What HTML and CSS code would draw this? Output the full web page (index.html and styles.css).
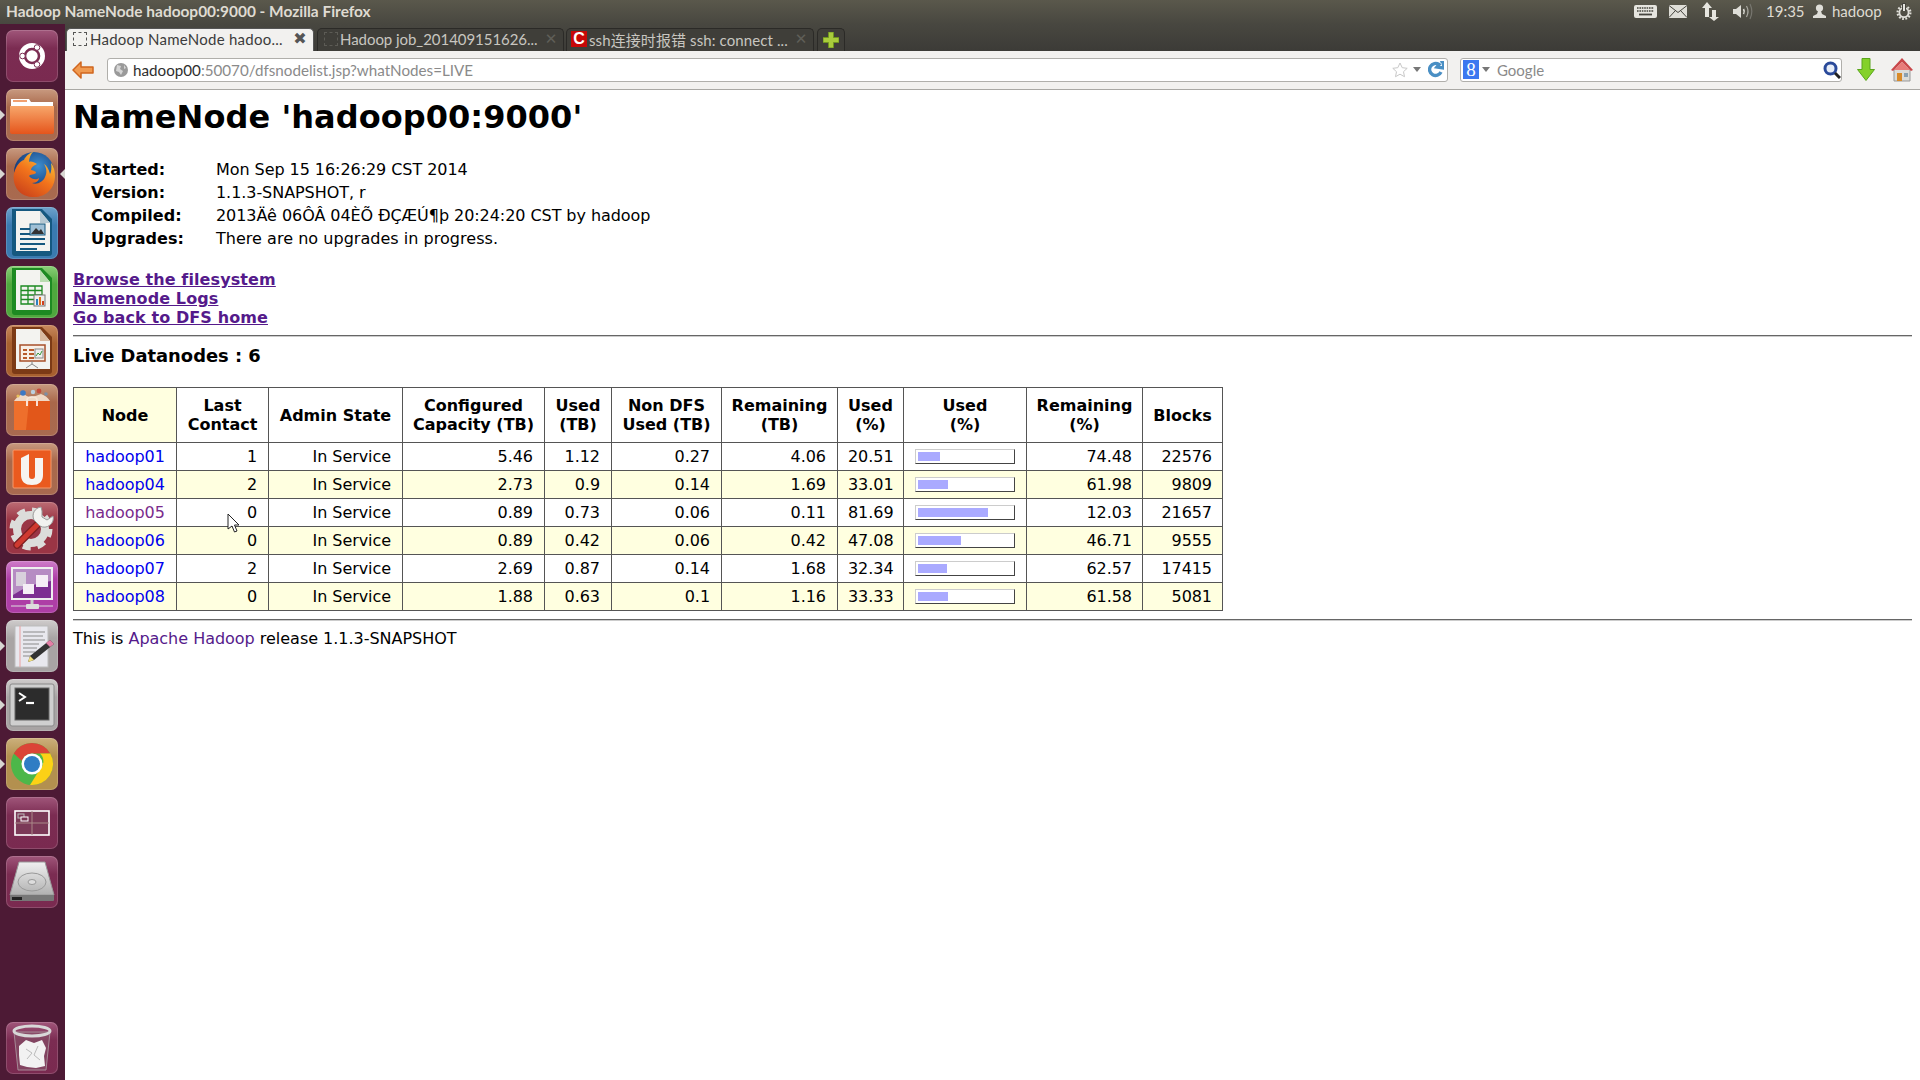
FILE: index.html
```html
<!DOCTYPE html>
<html lang="en">
<head>
<meta charset="utf-8">
<title>Hadoop NameNode hadoop00:9000</title>
<link rel="stylesheet" href="styles.css">
</head>
<body>
<div class="screen">
  <header class="panel">
    <span class="win-title">Hadoop NameNode hadoop00:9000 - Mozilla Firefox</span>
    <div class="tray">
      <svg class="t-kbd" width="23" height="13" viewBox="0 0 23 13"><rect width="23" height="13" rx="2" fill="#e6e5df"/><path d="M3 3h17M3 6h17" stroke="#45443e" stroke-width="1.6" stroke-dasharray="1.6 .8"/><path d="M5 9.5h13" stroke="#45443e" stroke-width="1.8"/></svg>
      <svg class="t-mail" width="18" height="13" viewBox="0 0 18 13"><rect width="18" height="13" fill="#dfded8"/><path d="M0 .5l9 7 9-7M0 12.5l6.5-7M18 12.5l-6.5-7" fill="none" stroke="#45443e" stroke-width="1"/></svg>
      <svg class="t-net" width="17" height="19" viewBox="0 0 17 19"><path d="M5 0l5 6H7v9H3V6H0zM10 8h4v7h3l-5 4-5-4h3z" fill="#e6e5df"/></svg>
      <svg class="t-vol" width="20" height="17" viewBox="0 0 20 17"><path d="M0 6h3l5-4v13l-5-4H0z" fill="#dfded8"/><path d="M10.5 6q1.5 2.500 0 5" fill="none" stroke="#dfded8" stroke-width="1.600"/><path d="M13.500 3q3 5.500 0 11" fill="none" stroke="#aaa9a2" stroke-width="1.200"/><path d="M17 1q3.600 7.500 0 15" fill="none" stroke="#77766f" stroke-width="1.200"/></svg>
      <span class="t-clock">19:35</span>
      <svg class="t-user" width="13" height="14" viewBox="0 0 13 14"><circle cx="6.500" cy="4" r="3.600" fill="#dfded8"/><path d="M5 7h3l1 3 4 2v2H0v-2l4-2z" fill="#dfded8"/></svg>
      <span class="t-name">hadoop</span>
      <svg class="t-gear" width="16" height="17" viewBox="0 0 16 17"><circle cx="8" cy="9.500" r="6.400" fill="none" stroke="#dfded8" stroke-width="2.200" stroke-dasharray="1.800 1.500"/><circle cx="8" cy="9.500" r="4.600" fill="none" stroke="#dfded8" stroke-width="1.800"/><path d="M8 0v8" stroke="#45443e" stroke-width="4"/><path d="M8 1v7" stroke="#e6e5df" stroke-width="2"/></svg>
    </div>
  </header>
  <div class="desk">
    <nav class="launcher">
      <div class="tile t-plum"><svg viewBox="0 0 52 52"><circle cx="26" cy="26" r="13" fill="#fff"/><circle cx="26" cy="26" r="7" fill="none" stroke="#7b2c52" stroke-width="2.600"/><circle cx="16.500" cy="26" r="2.800" fill="#fff" stroke="#7b2c52"/><circle cx="31" cy="17.500" r="2.800" fill="#fff" stroke="#7b2c52"/><circle cx="31" cy="34.500" r="2.800" fill="#fff" stroke="#7b2c52"/></svg></div>
      <div class="tile t-orange pip"><svg viewBox="0 0 52 52"><path d="M5 10h18l2 3h22v6H5z" fill="#fff"/><rect x="7" y="11" width="14" height="2" fill="#f0a070"/><path d="M4 17h44v26a2 2 0 0 1-2 2H6a2 2 0 0 1-2-2z" fill="url(#fold)"/><defs><linearGradient id="fold" x1="0" y1="0" x2="0" y2="1"><stop offset="0" stop-color="#f7a66a"/><stop offset="1" stop-color="#e5551c"/></linearGradient></defs></svg></div>
      <div class="tile t-orange pip pip-r"><svg viewBox="0 0 52 52"><defs><radialGradient id="ffg" cx=".6" cy=".35" r=".6"><stop offset="0" stop-color="#3d8fd0"/><stop offset="1" stop-color="#153a78"/></radialGradient><linearGradient id="ffo" x1=".8" y1="0" x2=".2" y2="1"><stop offset="0" stop-color="#fbd13a"/><stop offset=".5" stop-color="#f2741c"/><stop offset="1" stop-color="#c9401a"/></linearGradient></defs><circle cx="28" cy="24" r="20" fill="url(#ffg)"/><path d="M27 4c-4 1-8 5-9 8-4 1-8 6-10 13-2 10 3 23 18 24 14 1 23-9 23-21 0-6-2-11-4-13 1 5 0 9-1 11-1-5-4-9-6-10 3 5 3 9 1 13-2 5-8 8-13 6 5 0 7-3 7-5-2 2-7 2-10-2 1-2 5-1 7-3 0-2-2-2-5-3 0-3 4-5 6-6-3-2-6-3-8-2 0-4 2-8 4-10z" fill="url(#ffo)"/></svg></div>
      <div class="tile t-blue"><svg viewBox="0 0 52 52"><path d="M6 2h30l10 10v34a3 3 0 0 1-3 3H9a3 3 0 0 1-3-3z" fill="#15587f"/><path d="M10 4h24l10 12v28H10z" fill="#f3f3f0"/><path d="M34 4v12h10z" fill="#b6c9d3"/><path d="M14 21h10v2H14zM14 26h10v2H14zM14 31h25v2H14zM14 36h25v2H14zM14 41h17v2H14z" fill="#15587f"/><rect x="24" y="17" width="15" height="11" fill="#9fc0d6" stroke="#15587f"/><path d="M25 27l5-6 3 3 2-2 3 5z" fill="#333"/></svg></div>
      <div class="tile t-green"><svg viewBox="0 0 52 52"><path d="M6 2h30l10 10v34a3 3 0 0 1-3 3H9a3 3 0 0 1-3-3z" fill="#1d8a22"/><path d="M10 4h24l10 12v28H10z" fill="#f3f3f0"/><path d="M34 4v12h10z" fill="#b9dcb0"/><path d="M15 20h21v18H15zM15 24.500h21M15 29h21M15 33.500h21M22 20v18M29 20v18" fill="none" stroke="#1d8a22" stroke-width="1.300"/><rect x="28" y="29" width="11" height="11" fill="#eee" stroke="#777"/><path d="M30 33h2v6h-2z" fill="#2d7fc0"/><path d="M33 31h2v8h-2z" fill="#e0701e"/><path d="M36 35h2v4h-2z" fill="#d04020"/></svg></div>
      <div class="tile t-brown"><svg viewBox="0 0 52 52"><path d="M6 2h30l10 10v34a3 3 0 0 1-3 3H9a3 3 0 0 1-3-3z" fill="#7c3a16"/><path d="M10 4h24l10 12v28H10z" fill="#f3f3f0"/><path d="M34 4v12h10z" fill="#d8b9a0"/><rect x="14" y="20" width="25" height="16" fill="#f8efe6" stroke="#a8502a" stroke-width="1.500"/><path d="M17 24h4v2h-4zM17 28h4v2h-4zM17 32h4v2h-4zM23 24h5v2h-5zM23 28h5v2h-5zM23 32h5v2h-5z" fill="#b85a2a"/><rect x="29" y="24" width="8" height="9" fill="#eee" stroke="#888"/><path d="M30 31l2-3 2 2 2-4" fill="none" stroke="#3a9a3a"/><path d="M26 36v3l-6 4M26 39l6 4" fill="none" stroke="#888"/></svg></div>
      <div class="tile t-orange"><svg viewBox="0 0 52 52"><path d="M8 17h36v29H8z" fill="#e2571a"/><path d="M8 17h15l-3 29H8z" fill="#ee6f2c"/><path d="M21 22v-6q0-3 5-3t5 3v6" fill="none" stroke="#fff" stroke-width="1.600"/><path d="M8 17q4-6 10-7 4 4 8 3t9-3q6 2 9 7z" fill="#f6e3d2" opacity=".9"/><circle cx="17" cy="9" r="2.800" fill="#3c78c4"/><circle cx="27" cy="8" r="2.200" fill="#bcd0e0"/><circle cx="33" cy="7" r="2.400" fill="#c44b3c"/><circle cx="40" cy="10" r="1.800" fill="#7b8fa6"/><circle cx="12" cy="12" r="1.600" fill="#e8c05a"/></svg></div>
      <div class="tile t-orange"><svg viewBox="0 0 52 52"><rect x="7" y="7" width="38" height="38" rx="1" fill="#ea5a1f" stroke="#f59a6c"/><path d="M15 15l8-4v22q0 3 3 3t3-3V15h8v17q0 10-11 10T15 32z" fill="#f6f4f1"/></svg></div>
      <div class="tile t-red"><svg viewBox="0 0 52 52"><circle cx="25" cy="27" r="19" fill="none" stroke="#dcdcda" stroke-width="5" stroke-dasharray="8 7"/><circle cx="25" cy="27" r="14" fill="none" stroke="#dcdcda" stroke-width="8"/><path d="M11 43l21-21" stroke="#7c1f22" stroke-width="7.500" stroke-linecap="round"/><path d="M11 43l21-21" stroke="#cf3a30" stroke-width="5" stroke-linecap="round"/><path d="M35 5a9 9 0 0 0-7 13l6 6a9 9 0 0 0 13-10l-6 4-5-3V9z" fill="#f2f2f0" stroke="#999"/></svg></div>
      <div class="tile t-purple"><svg viewBox="0 0 52 52"><rect x="5" y="6" width="42" height="33" fill="#eee"/><rect x="7" y="8" width="38" height="29" fill="#7d2f92"/><path d="M7 8h38v12q-20 2-38 14z" fill="#b68cc3"/><rect x="10" y="11" width="10" height="14" fill="#d8d0dc"/><rect x="30" y="14" width="12" height="12" fill="#f5eef6"/><rect x="17" y="23" width="11" height="10" fill="#f5eef6"/><path d="M26 39v5" stroke="#ccc" stroke-width="3"/><rect x="20" y="43" width="13" height="5" rx="1" fill="#ddd"/><path d="M5 45h42" stroke="#ddd"/></svg></div>
      <div class="tile t-grey pip"><svg viewBox="0 0 52 52"><rect x="9" y="6" width="33" height="41" fill="#e8e8ee" stroke="#bbb"/><path d="M14 6v41" stroke="#e9a0a0"/><path d="M17 12h22M17 16h20M17 20h22M17 24h16M17 28h14M17 32h12M17 36h10" stroke="#8a8a8a" stroke-width="1.200"/><path d="M44 20l4 4-20 16-6 2 2-6z" fill="#333"/><path d="M44 20l4 4-4 3-4-4z" fill="#e37fa6"/><path d="M24 36l4 4-6 2z" fill="#f0dd7a"/></svg></div>
      <div class="tile t-grey pip"><svg viewBox="0 0 52 52"><rect x="4" y="5" width="44" height="42" rx="2" fill="#cfcfcf" stroke="#8a8a8a"/><rect x="9" y="9" width="34" height="32" fill="#2c2c2c" stroke="#666"/><path d="M13 14l6 4-6 4" fill="none" stroke="#fff" stroke-width="2"/><path d="M20 24h8" stroke="#fff" stroke-width="2.200"/></svg></div>
      <div class="tile t-gold pip"><svg viewBox="0 0 52 52"><circle cx="26" cy="26" r="21" fill="#4cb749"/><path d="M26 5a21 21 0 0 1 18.200 10.500H26a10.500 10.500 0 0 0-10 7.500L7.800 15.500A21 21 0 0 1 26 5z" fill="#db4437"/><path d="M44.200 15.500A21 21 0 0 1 24 47l10-16a10.500 10.500 0 0 0 0-15.500z" fill="#fcd116"/><circle cx="26" cy="26" r="10.500" fill="#fff"/><circle cx="26" cy="26" r="8" fill="#2f7dc4"/></svg></div>
      <div class="tile t-plum"><svg viewBox="0 0 52 52"><rect x="9" y="14" width="34" height="24" fill="#7b3957" stroke="#fff" stroke-width="1.600"/><path d="M9 26h34M26 14v24" stroke="#a88" stroke-width="1"/><rect x="12" y="17" width="6" height="4" fill="none" stroke="#bbb"/><rect x="15" y="20" width="7" height="4" fill="#7b3957" stroke="#fff"/></svg></div>
      <div class="tile t-plum"><svg viewBox="0 0 52 52"><defs><linearGradient id="hdd" x1="0" y1="0" x2="0" y2="1"><stop offset="0" stop-color="#f0f0f0"/><stop offset="1" stop-color="#b0b0b0"/></linearGradient></defs><path d="M13 6h26l9 33H4z" fill="url(#hdd)" stroke="#999"/><path d="M4 39h44v5a1 1 0 0 1-1 1H5a1 1 0 0 1-1-1z" fill="#777"/><path d="M6 41h10v3H6z" fill="#222"/><ellipse cx="26" cy="26" rx="14" ry="9" fill="none" stroke="#999"/><ellipse cx="26" cy="26" rx="4" ry="2.500" fill="#ddd" stroke="#999"/></svg></div>
      <div class="tile t-plum t-trash"><svg viewBox="0 0 52 52"><path d="M8 10l4 38h28l4-38z" fill="#8a5c70" fill-opacity=".5" stroke="#a58a96"/><ellipse cx="26" cy="9" rx="18" ry="5" fill="none" stroke="#d8d8d8" stroke-width="3"/><path d="M13 24l7-6 8 3 8-3 4 8-2 8 1 10-9 2-9-1-7-2-1-10z" fill="#f2f2f2"/><path d="M20 27l6 4-5 6M32 24l-4 9 6 5" fill="none" stroke="#bbb"/></svg></div>
    </nav>
    <div class="browser">
      <div class="tabstrip">
        <div class="tab tab-on">
          <span class="fav fav-on"></span><span class="tab-label tab-label-on">Hadoop NameNode hadoo...</span><span class="tab-x tab-x-on">✖</span>
        </div>
        <div class="tab tab-2">
          <span class="fav"></span><span class="tab-label tab-label-2">Hadoop job_201409151626...</span><span class="tab-x tab-x-off">✕</span>
        </div>
        <div class="tab tab-3">
          <span class="fav fav-c">C</span><span class="tab-label tab-cjk">ssh连接时报错 ssh: connect ...</span><span class="tab-x tab-x-off">✕</span>
        </div>
        <div class="tab tab-new"><svg width="16" height="16" viewBox="0 0 16 16"><path d="M5.500 0h5v5.500H16v5h-5.500V16h-5v-5.500H0v-5h5.500z" fill="#a9cc3c" stroke="#6f9420"/></svg></div>
      </div>
      <div class="toolbar">
        <svg class="ic-back" width="22" height="18" viewBox="0 0 22 18"><path d="M9 1L1 9l8 8v-5h12V6H9z" fill="#f09a50" stroke="#d0651e" stroke-width="1.500" stroke-linejoin="round"/></svg>
        <div class="urlbar">
          <svg class="ic-globe" width="14" height="14" viewBox="0 0 14 14"><circle cx="7" cy="7" r="7" fill="#9a9a9a"/><path d="M3 2l4 1-1 3 3 2-2 4-2-3-3-1zM10 2l2 3-2 1z" fill="#d5d5d5"/></svg>
          <span class="url"><span class="url-host">hadoop00</span>:50070/dfsnodelist.jsp?whatNodes=LIVE</span>
          <svg class="ic-star" width="16" height="16" viewBox="0 0 16 16"><path d="M8 1l2.200 4.700 5 .6-3.700 3.400 1 5L8 12.200 3.500 14.700l1-5L.8 6.300l5-.6z" fill="#fff" stroke="#c8c8c8"/></svg>
          <span class="drop"></span>
          <svg class="ic-reload" width="16" height="17" viewBox="0 0 16 17"><path d="M13 11a6 6 0 1 1-2-7.500L9 6l7 1-1-7-2 2" fill="none" stroke="#4a8fc4" stroke-width="3.400"/></svg>
        </div>
        <div class="searchbar">
          <span class="g-box">8</span>
          <span class="drop"></span>
          <span class="search-text">Google</span>
          <svg class="ic-mag" width="18" height="18" viewBox="0 0 18 18"><circle cx="7.500" cy="7.500" r="5.500" fill="#e8eef8" stroke="#2a4a9a" stroke-width="3"/><path d="M12 12l5 5" stroke="#222" stroke-width="3"/></svg>
        </div>
        <svg class="ic-down" width="18" height="23" viewBox="0 0 18 23"><path d="M5 .5h8v11h4.500L9 22.500.5 11.500H5z" fill="#84d12a" stroke="#5aa51c"/></svg>
        <svg class="ic-home" width="22" height="24" viewBox="0 0 22 24"><path d="M3 11h16v12H3z" fill="#dcdcd8" stroke="#999"/><path d="M11 0l11 12-2 1-9-9-9 9-2-1z" fill="#c8474a"/><path d="M11 4l8 8H3z" fill="#e87c7a"/><rect x="6" y="15" width="5" height="8" fill="#d98a28"/><rect x="13" y="15" width="4" height="4" fill="#8aa0b0"/></svg>
      </div>
      <main class="page">
        <h1 class="title">NameNode 'hadoop00:9000'</h1>
        <table class="info">
          <tr><td class="info-k">Started:</td><td>Mon Sep 15 16:26:29 CST 2014</td></tr>
          <tr><td class="info-k">Version:</td><td>1.1.3-SNAPSHOT, r</td></tr>
          <tr><td class="info-k">Compiled:</td><td>2013Äê 06ÔÂ 04ÈÕ ÐÇÆÚ¶þ 20:24:20 CST by hadoop</td></tr>
          <tr><td class="info-k">Upgrades:</td><td class="info-wide">There are no upgrades in progress.</td></tr>
        </table>
        <div class="links">
          <a class="strong-link" href="#">Browse the filesystem</a>
          <a class="strong-link" href="#">Namenode Logs</a>
          <a class="strong-link" href="#">Go back to DFS home</a>
        </div>
        <hr class="rule">
        <h3 class="live">Live Datanodes : 6</h3>
        <table class="nodes">
          <colgroup>
            <col class="c1"><col class="c2"><col class="c3"><col class="c4"><col class="c5"><col class="c6"><col class="c7"><col class="c8"><col class="c9"><col class="c10"><col class="c11">
          </colgroup>
          <thead>
            <tr><th class="th-node">Node</th><th>Last<br>Contact</th><th>Admin State</th><th>Configured<br>Capacity (TB)</th><th>Used<br>(TB)</th><th>Non DFS<br>Used (TB)</th><th>Remaining<br>(TB)</th><th>Used<br>(%)</th><th>Used<br>(%)</th><th>Remaining<br>(%)</th><th>Blocks</th></tr>
          </thead>
          <tbody>
            <tr><td class="name"><a class="node" href="#">hadoop01</a></td><td>1</td><td>In Service</td><td>5.46</td><td>1.12</td><td>0.27</td><td>4.06</td><td>20.51</td><td class="cell-bar"><div class="bar"><div class="fill" style="width:22px"></div></div></td><td>74.48</td><td>22576</td></tr>
            <tr><td class="name"><a class="node" href="#">hadoop04</a></td><td>2</td><td>In Service</td><td>2.73</td><td>0.9</td><td>0.14</td><td>1.69</td><td>33.01</td><td class="cell-bar"><div class="bar"><div class="fill" style="width:30px"></div></div></td><td>61.98</td><td>9809</td></tr>
            <tr><td class="name"><a class="node node-seen" href="#">hadoop05</a></td><td>0</td><td>In Service</td><td>0.89</td><td>0.73</td><td>0.06</td><td>0.11</td><td>81.69</td><td class="cell-bar"><div class="bar"><div class="fill" style="width:70px"></div></div></td><td>12.03</td><td>21657</td></tr>
            <tr><td class="name"><a class="node" href="#">hadoop06</a></td><td>0</td><td>In Service</td><td>0.89</td><td>0.42</td><td>0.06</td><td>0.42</td><td>47.08</td><td class="cell-bar"><div class="bar"><div class="fill" style="width:43px"></div></div></td><td>46.71</td><td>9555</td></tr>
            <tr><td class="name"><a class="node" href="#">hadoop07</a></td><td>2</td><td>In Service</td><td>2.69</td><td>0.87</td><td>0.14</td><td>1.68</td><td>32.34</td><td class="cell-bar"><div class="bar"><div class="fill" style="width:29px"></div></div></td><td>62.57</td><td>17415</td></tr>
            <tr><td class="name"><a class="node" href="#">hadoop08</a></td><td>0</td><td>In Service</td><td>1.88</td><td>0.63</td><td>0.1</td><td>1.16</td><td>33.33</td><td class="cell-bar"><div class="bar"><div class="fill" style="width:30px"></div></div></td><td>61.58</td><td>5081</td></tr>
          </tbody>
        </table>
        <hr class="rule">
        <p class="foot">This is <a class="apache" href="#">Apache Hadoop</a> release 1.1.3-SNAPSHOT</p>
        <svg class="cursor" width="13" height="20" viewBox="0 0 13 20"><path d="M1 1v15l4-3 2.500 6 2.500-1-2.500-6H12z" fill="#fff" stroke="#222" stroke-width="1"/></svg>
      </main>
    </div>
  </div>
</div>
</body>
</html>
```
FILE: styles.css
```css
html, body { margin: 0; padding: 0; height: 100%; overflow: hidden; background: #fff; }
.screen { display: flex; flex-direction: column; width: 1920px; height: 1080px; }

/* top panel */
.panel { height: 24px; flex: none; box-sizing: border-box; padding-bottom: 2px; display: flex; align-items: center; justify-content: space-between; background: linear-gradient(#5a584c, #484740); font-family: Lato, "Noto Sans", sans-serif; }
.win-title { margin-left: 6px; color: #dfdbd2; font-weight: 700; font-size: 15.45px; }
.tray { display: flex; align-items: center; color: #dfdbd2; font-size: 15px; }
.t-kbd { margin-right: 12px; }
.t-mail { margin-right: 15px; }
.t-net { margin-right: 14px; }
.t-vol { margin-right: 13px; }
.t-clock { width: 47px; }
.t-user { margin-right: 6px; }
.t-name { width: 64px; }
.t-gear { margin-right: 8px; }

.desk { flex: 1; display: flex; min-height: 0; }

/* launcher */
.launcher { width: 65px; flex: none; box-sizing: border-box; padding: 6px 0 6px 6px; display: flex; flex-direction: column; gap: 7px; background: #4d1a35; }
.tile { position: relative; width: 52px; height: 52px; flex: none; border-radius: 7px; box-shadow: inset 0 0 0 1px rgba(255, 255, 255, .16); }
.tile svg { display: block; width: 52px; height: 52px; }
.t-plum { background: linear-gradient(#a0567a, #7b2c52 35%, #7a2a50); }
.t-orange { background: linear-gradient(#c89a80, #a9684a 35%, #a86a50); }
.t-blue { background: linear-gradient(#6fa3cc, #3a7ab0 35%); }
.t-green { background: linear-gradient(#8bcf78, #4fa83e 35%); }
.t-brown { background: linear-gradient(#c8895e, #a8602f 35%); }
.t-red { background: linear-gradient(#bc6c74, #9a3545 35%); }
.t-purple { background: linear-gradient(#cf7cc9, #ae3ea6 35%); }
.t-grey { background: linear-gradient(#cfcccc, #a8a4a4 35%); }
.t-gold { background: linear-gradient(#ccb07c, #b3904f 35%); }
.t-trash { margin-top: auto; }
.pip::before { content: ""; position: absolute; left: -6px; top: 21px; border: 5px solid transparent; border-left: 5px solid #d8d6d2; border-right: 0; }
.pip-r::after { content: ""; position: absolute; right: -7px; top: 21px; border: 5px solid transparent; border-right: 5px solid #d8d6d2; border-left: 0; }

/* browser chrome */
.browser { flex: 1; min-width: 0; display: flex; flex-direction: column; }
.tabstrip { height: 27px; flex: none; box-sizing: border-box; padding: 4px 0 0 1px; display: flex; gap: 3px; background: linear-gradient(#484740, #3c3b37); font-family: Lato, "Noto Sans", sans-serif; }
.tab { width: 248px; height: 23px; box-sizing: border-box; display: flex; align-items: center; padding: 0 5px 2px 6px; border: 1px solid #2b2a27; border-bottom: 0; border-radius: 5px 5px 0 0; background: #3f3e39; color: #c8c6c0; font-size: 15px; }
.tab-on { background: #f2f1ef; color: #3c3c3c; border-color: #555; }
.tab-2 { width: 247px; }
.tab-3 { margin-left: -1px; }
.tab-new { width: 28px; padding: 0; justify-content: center; }
.fav { width: 14px; height: 14px; flex: none; border: 1px dashed #5c5b55; box-sizing: border-box; margin-right: 2px; }
.fav-on { border-color: #555; margin-right: 3px; }
.fav-c { width: 16px; height: 16px; margin: 0 2px 0 -2px; border: 0; background: #c80808; color: #fff; font: 700 16px/16px "Liberation Sans", sans-serif; text-align: center; }
.tab-label { flex: 1; white-space: nowrap; overflow: hidden; }
.tab-label-on { letter-spacing: .25px; }
.tab-label-2 { letter-spacing: -.05px; }
.tab-cjk { font-family: Lato, "Noto Sans CJK SC", sans-serif; letter-spacing: .1px; }
.tab-x { width: 16px; flex: none; text-align: center; font: 700 15px/1 "DejaVu Sans", sans-serif; color: #5f5e58; }
.tab-x-on { font-size: 16px; color: #555; }
.tab-x-off { margin-right: -1px; }

.toolbar { height: 39px; flex: none; box-sizing: border-box; display: flex; align-items: center; padding: 0 7px 1px 7px; background: #f2f1ef; border-bottom: 1px solid #a9a8a4; font-family: Lato, "Noto Sans", sans-serif; }
.ic-back { margin-right: 13px; flex: none; }
.urlbar { flex: 1; height: 24px; box-sizing: border-box; display: flex; align-items: center; padding: 0 3px 0 6px; background: #fff; border: 1px solid #b0afab; border-radius: 3px; }
.ic-globe { margin-right: 5px; }
.url { flex: 1; color: #8a8a8a; font-size: 15.2px; }
.url-host { color: #2e2e2e; }
.ic-star { margin-right: 5px; }
.drop { width: 0; height: 0; flex: none; border: 4px solid transparent; border-top: 5px solid #777; border-bottom: 0; margin-right: 7px; }
.searchbar { width: 382px; height: 24px; flex: none; box-sizing: border-box; margin-left: 12px; display: flex; align-items: center; padding: 0 0 0 2px; background: #fff; border: 1px solid #b0afab; border-radius: 3px; }
.g-box { width: 16px; height: 19px; flex: none; margin-right: 3px; background: #3c78f0; color: #fff; font: 19px/19px "Liberation Serif", serif; text-align: center; }
.search-text { flex: 1; color: #8a8a8a; font-size: 15px; }
.ic-down { margin-left: 15px; flex: none; }
.ic-home { margin-left: 16px; flex: none; }

/* page */
.page { position: relative; flex: 1; padding: 9px 8px 8px; font-family: "DejaVu Sans", sans-serif; font-size: 16px; color: #000; min-height: 0; letter-spacing: -.06px; }
.title { margin: 0 0 21.44px; font-size: 32px; font-weight: 700; line-height: 37px; letter-spacing: .05px; }
.info { border-spacing: 2px; }
.info td { padding: 1px; line-height: 19px; }
.info td.info-k { width: 121px; padding-left: 16px; font-weight: 700; letter-spacing: 0; }
.info td.info-wide { letter-spacing: .03px; }
.links { margin-top: 19px; display: flex; flex-direction: column; align-items: flex-start; line-height: 19px; }
.strong-link { color: #551a8b; font-weight: 700; text-decoration: underline; letter-spacing: .1px; }
.rule { margin: 8px 0; border: 0; border-top: 1px solid #666; border-bottom: 1px solid #ccc; }
.live { margin: 0 0 20px; font-size: 17.9px; font-weight: 700; line-height: 22px; letter-spacing: 0; }
.nodes { border-collapse: collapse; table-layout: fixed; width: 1149px; }
.c1 { width: 103px; } .c2 { width: 92px; } .c3 { width: 134px; } .c4 { width: 142px; } .c5 { width: 67px; } .c6 { width: 110px; }
.c7 { width: 116px; } .c8 { width: 66px; } .c9 { width: 123px; } .c10 { width: 116px; } .c11 { width: 80px; }
.nodes th, .nodes td { border: 1px solid #555; line-height: 19px; white-space: nowrap; }
.nodes th { padding: 8px 0; font-weight: 700; text-align: center; letter-spacing: 0; }
.th-node { background: #ffffe0; }
.nodes td { padding: 4px 11px 4px 10px; text-align: right; }
.nodes td:nth-child(n+10) { padding-right: 10px; }
.nodes td.name { text-align: center; padding: 4px 0; }
.nodes tbody tr:nth-child(even) td { background: #ffffe0; }
.nodes td.cell-bar { padding: 6px 10px 6px 11px; }
.bar { width: 100px; height: 15px; box-sizing: border-box; padding: 2px; border: 1px solid; border-color: #ccc #444 #444 #ccc; background: #fff; }
.fill { height: 9px; background: #aaaaff; }
.node { color: #0000ee; text-decoration: none; }
.node-seen { color: #7a2b8c; }
.foot { margin: 0; line-height: 19px; letter-spacing: -.02px; }
.apache { color: #551a8b; text-decoration: none; }
.cursor { position: absolute; left: 162px; top: 423px; }
```
